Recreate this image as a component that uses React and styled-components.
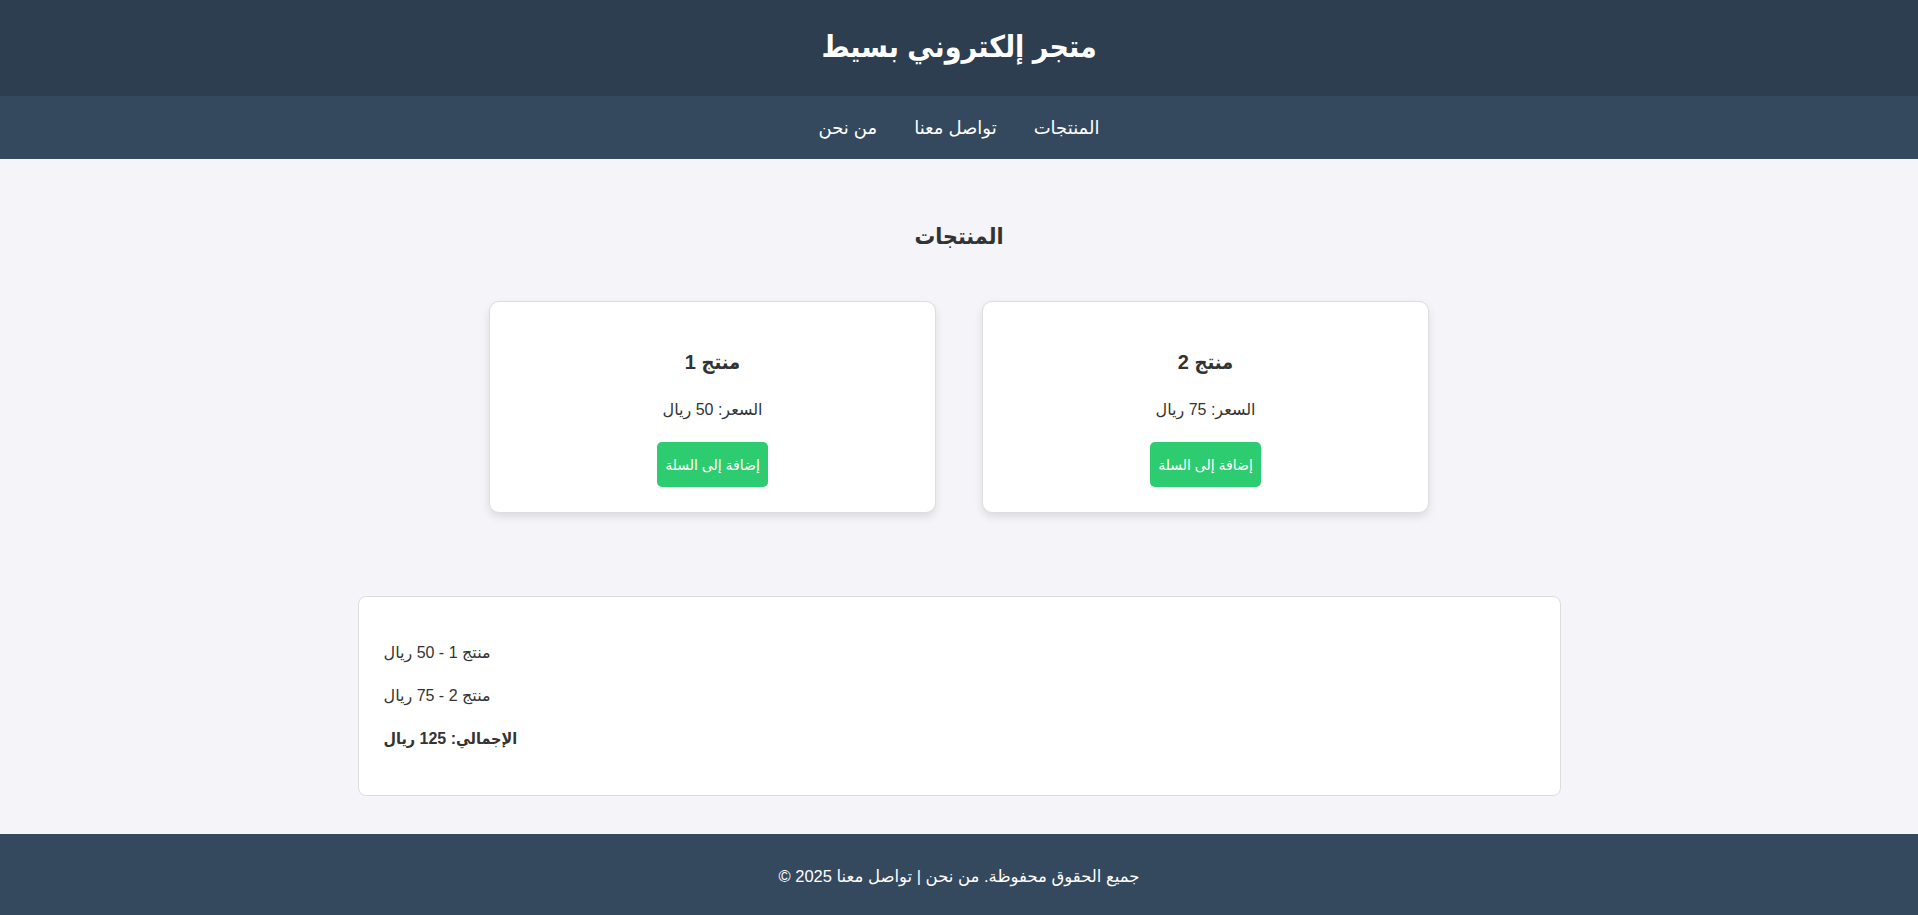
import React from 'react';
import styled, { createGlobalStyle } from 'styled-components';

const GlobalStyle = createGlobalStyle`
  html, body {
    margin: 0;
    padding: 0;
    background: #f4f4f9;
    color: #333;
    font-family: "Liberation Sans", Arial, "DejaVu Sans", sans-serif;
  }

  * {
    box-sizing: border-box;
  }
`;

// bold Arabic looks too wide in the regular fallback, so headings use the condensed cut
const boldStack = '"Liberation Sans", Arial, "DejaVu Sans Condensed", "DejaVu Sans", sans-serif';

const Header = styled.header`
  height: 96px;
  padding-bottom: 4px;
  background: #2c3e50;
  color: #fff;
  display: flex;
  align-items: center;
  justify-content: center;
`;

const Title = styled.h1`
  margin: 0;
  font-family: ${boldStack};
  font-size: 30px;
  font-weight: bold;
`;

const Nav = styled.nav`
  height: 63px;
  background: #34495e;
  display: flex;
  align-items: center;
  justify-content: center;
  gap: 37px;
  direction: rtl;
`;

const NavLink = styled.a`
  color: #fff;
  text-decoration: none;
  font-size: 18px;
  cursor: pointer;
`;

const Main = styled.main`
  display: flex;
  flex-direction: column;
  align-items: center;
  padding-top: 63px;
`;

const SectionTitle = styled.h2`
  margin: 0 0 51px;
  font-family: ${boldStack};
  font-size: 23px;
  line-height: 28px;
`;

const ProductGrid = styled.div`
  display: flex;
  justify-content: center;
  gap: 46px;
`;

const Card = styled.div`
  width: 447px;
  background: #fff;
  border: 1px solid #ddd;
  border-radius: 10px;
  box-shadow: 0 4px 8px rgba(0, 0, 0, 0.1);
  padding: 49px 20px 25px;
  display: flex;
  flex-direction: column;
  align-items: center;
`;

const CardTitle = styled.h3`
  margin: 0 0 27px;
  font-family: ${boldStack};
  font-size: 20px;
  line-height: 23px;
`;

const Price = styled.p`
  margin: 0 0 23px;
  font-size: 16px;
  line-height: 18px;
`;

const AddButton = styled.button`
  height: 45px;
  padding: 0 8px;
  background: #2ecc71;
  color: #fff;
  border: none;
  border-radius: 5px;
  font-family: inherit;
  font-size: 14px;
  cursor: pointer;
`;

const Cart = styled.div`
  width: 1203px;
  margin-top: 83px;
  background: #fff;
  border: 1px solid #ddd;
  border-radius: 8px;
  padding: 47px 25px;
  display: flex;
  flex-direction: column;
  gap: 25px;
`;

const CartLine = styled.p`
  margin: 0;
  font-family: ${p => (p.$total ? boldStack : 'inherit')};
  font-size: 16px;
  line-height: 18px;
  font-weight: ${p => (p.$total ? 'bold' : 'normal')};
`;

const Footer = styled.footer`
  margin-top: 38px;
  height: 90px;
  background: #34495e;
  color: #fff;
  display: flex;
  justify-content: center;
  padding-top: 33px;
  font-size: 16.5px;
`;

const products = [
  { id: 1, name: 'منتج 1', price: 50 },
  { id: 2, name: 'منتج 2', price: 75 },
];

export default function App() {
  const total = products.reduce((sum, p) => sum + p.price, 0);

  return (
    <>
      <GlobalStyle />
      <Header>
        <Title>متجر إلكتروني بسيط</Title>
      </Header>
      <Nav>
        <NavLink>المنتجات</NavLink>
        <NavLink>تواصل معنا</NavLink>
        <NavLink>من نحن</NavLink>
      </Nav>
      <Main>
        <SectionTitle>المنتجات</SectionTitle>
        <ProductGrid>
          {products.map(p => (
            <Card key={p.id}>
              <CardTitle>{p.name}</CardTitle>
              <Price>السعر: {p.price} ريال</Price>
              <AddButton>إضافة إلى السلة</AddButton>
            </Card>
          ))}
        </ProductGrid>
        <Cart>
          {products.map(p => (
            <CartLine key={p.id}>{p.name} - {p.price} ريال</CartLine>
          ))}
          <CartLine $total>الإجمالي: {total} ريال</CartLine>
        </Cart>
      </Main>
      <Footer>© 2025 جميع الحقوق محفوظة. من نحن | تواصل معنا</Footer>
    </>
  );
}
